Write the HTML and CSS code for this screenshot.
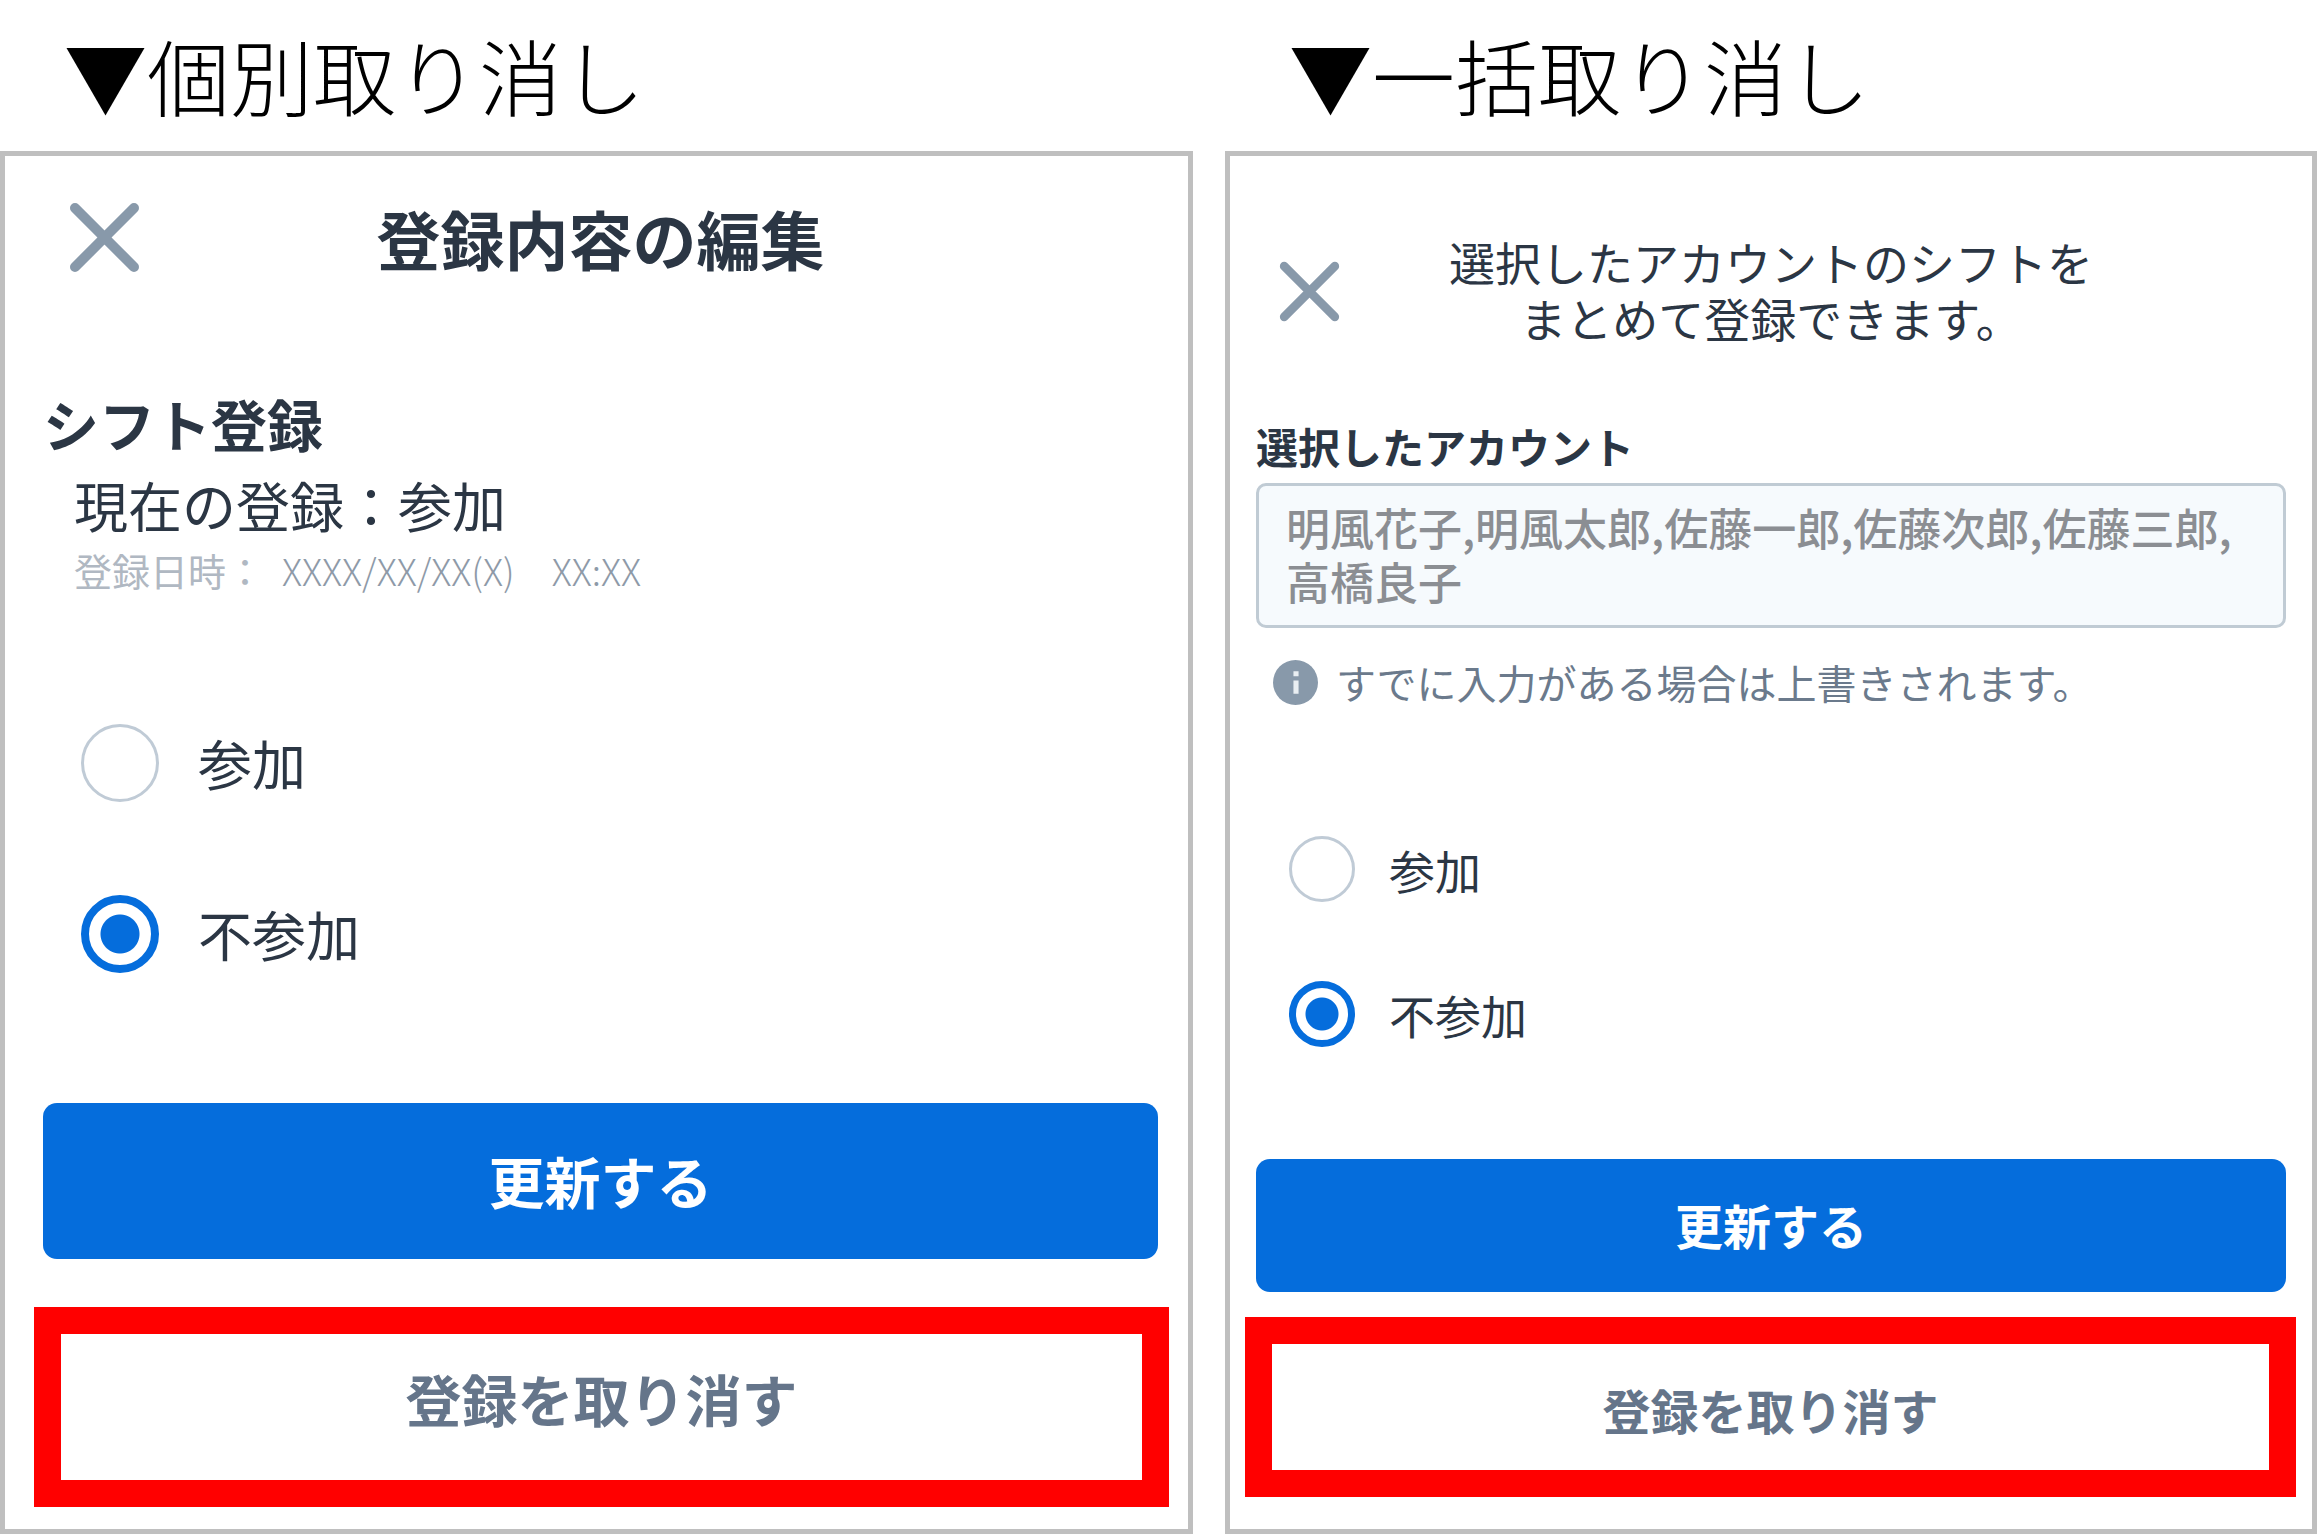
FILE: index.html
```html
<!DOCTYPE html>
<html lang="ja">
<head>
    <meta charset="UTF-8">
    <meta name="viewport" content="width=device-width, initial-scale=1.0">
    <title>シフト登録の取り消し</title>
    <link rel="stylesheet" href="styles.css">
</head>
<body>
    <main class="page">
        <section class="column single">
            <h1>▼個別取り消し</h1>
            <form class="panel">
                <div class="panel-header">
                    <button type="button" class="close-btn" aria-label="閉じる">
                        <svg viewBox="0 0 71 71"><path d="M6 6L65 65M65 6L6 65"/></svg>
                    </button>
                    <h2>登録内容の編集</h2>
                </div>

                <h3>シフト登録</h3>
                <p class="current">現在の登録：参加</p>
                <p class="date">登録日時：<span class="date-value">XXXX/XX/XX(X)　XX:XX</span></p>

                <div class="options">
                    <label class="option"><input type="radio" name="single">参加</label>
                    <label class="option"><input type="radio" name="single" checked>不参加</label>
                </div>

                <button type="button" class="submit-btn">更新する</button>
                <div class="highlight">
                    <button type="button" class="cancel-btn">登録を取り消す</button>
                </div>
            </form>
        </section>

        <section class="column bulk">
            <h1>▼一括取り消し</h1>
            <form class="panel">
                <div class="panel-header">
                    <button type="button" class="close-btn" aria-label="閉じる">
                        <svg viewBox="0 0 71 71"><path d="M6 6L65 65M65 6L6 65"/></svg>
                    </button>
                    <p class="lead">選択したアカウントのシフトを<br>まとめて登録できます。</p>
                </div>

                <label class="field-label" for="accounts">選択したアカウント</label>
                <textarea id="accounts" class="accounts" rows="2" readonly>明風花子,明風太郎,佐藤一郎,佐藤次郎,佐藤三郎,高橋良子</textarea>
                <p class="note">
                    <svg class="info-icon" viewBox="0 0 44 44">
                        <circle cx="22" cy="22" r="22" fill="#8899aa"/>
                        <path d="M20 11h5v5h-5zM20 20h5v13h-5z" fill="#e9eef2"/>
                    </svg>
                    すでに入力がある場合は上書きされます。
                </p>

                <div class="options">
                    <label class="option"><input type="radio" name="bulk">参加</label>
                    <label class="option"><input type="radio" name="bulk" checked>不参加</label>
                </div>

                <button type="button" class="submit-btn">更新する</button>
                <div class="highlight">
                    <button type="button" class="cancel-btn">登録を取り消す</button>
                </div>
            </form>
        </section>
    </main>
</body>
</html>
```

FILE: styles.css
```css
* {
    margin: 0;
    padding: 0;
    box-sizing: border-box;
}

body {
    font-family: "Noto Sans CJK JP", sans-serif;
    background: #fff;
    color: #2b3644;
}

button,
textarea {
    font-family: inherit;
    border: none;
    background: none;
}

.page {
    display: grid;
    grid-template-columns: 1193fr 1092fr;
    gap: 32px;
    min-height: 100vh;
}

.column {
    display: flex;
    flex-direction: column;
    min-width: 0;
}

h1 {
    padding: 26px 0 29px 64px;
    font-size: 83px;
    line-height: 96px;
    font-weight: 300;
    color: #000;
    white-space: nowrap;
}

.panel {
    flex: 1;
    display: flex;
    flex-direction: column;
    border: 5px solid #bfbfbf;
}

.single .panel {
    padding: 45px 30px 22px 38px;
}

.bulk .panel {
    padding: 77px 26px 32px;
}

.panel-header {
    display: grid;
    grid-template-columns: 1fr auto 1fr;
    align-items: center;
}

.close-btn {
    justify-self: start;
    width: 71px;
    height: 71px;
    margin-left: 26px;
    cursor: pointer;
}

.close-btn svg {
    display: block;
    width: 100%;
    height: 100%;
    fill: none;
    stroke: #8899aa;
    stroke-width: 10;
    stroke-linecap: round;
}

.bulk .close-btn {
    width: 61px;
    height: 61px;
    margin: 4px 0 0 23px;
}

h2 {
    font-size: 64px;
    line-height: 72px;
    font-weight: 700;
}

.lead {
    font-size: 46px;
    line-height: 56px;
    text-align: center;
}

h3 {
    margin-top: 118px;
    font-size: 56px;
    line-height: 64px;
    font-weight: 700;
}

.current {
    margin: 18px 0 0 31px;
    font-size: 54px;
    line-height: 64px;
}

.date {
    display: flex;
    gap: 18px;
    margin: 9px 0 0 31px;
    font-size: 38px;
    line-height: 48px;
    color: #b0b8c2;
}

.date-value {
    font-size: 37px;
    font-weight: 300;
    color: #8e9aa8;
}

.field-label {
    margin-top: 73px;
    font-size: 42px;
    line-height: 56px;
    font-weight: 700;
}

.accounts {
    display: block;
    width: 100%;
    margin-top: 9px;
    padding: 14px 27px 17px;
    border: 3px solid #c0cbd4;
    border-radius: 10px;
    background: #f6fafd;
    color: #8b8e93;
    font-size: 44px;
    line-height: 54px;
    font-weight: 500;
    resize: none;
    overflow: hidden;
    outline: none;
}

.note {
    display: flex;
    align-items: center;
    gap: 18px;
    margin: 26px 0 0 17px;
    font-size: 40px;
    line-height: 56px;
    color: #6b7a8c;
}

.info-icon {
    width: 45px;
    height: 45px;
}

.options {
    display: flex;
    flex-direction: column;
    align-items: flex-start;
    gap: 93px;
    margin: 130px 0 130px 38px;
}

.option {
    display: flex;
    align-items: center;
    gap: 39px;
    font-size: 54px;
    line-height: 78px;
    cursor: pointer;
}

.option input {
    appearance: none;
    width: 78px;
    height: 78px;
    border: 3px solid #c0cbd6;
    border-radius: 50%;
    background: #fff;
}

.option input:checked {
    border: 8px solid #056ddc;
    background: radial-gradient(circle, #056ddc 19px, #fff 20px);
}

.bulk .options {
    gap: 79px;
    margin: 126px 0 112px 33px;
}

.bulk .option {
    gap: 34px;
    font-size: 46px;
    line-height: 66px;
}

.bulk .option input {
    width: 66px;
    height: 66px;
}

.bulk .option input:checked {
    border-width: 7px;
    background: radial-gradient(circle, #056ddc 16px, #fff 17px);
}

.submit-btn {
    height: 156px;
    padding-bottom: 4px;
    border-radius: 14px;
    background: #056ddc;
    color: #fff;
    font-size: 56px;
    font-weight: 700;
    cursor: pointer;
}

/* red frame that points out the cancel button */
.highlight {
    display: flex;
    height: 200px;
    margin: 48px -11px 0 -9px;
    border: 27px solid #f00;
}

.cancel-btn {
    flex: 1;
    padding-bottom: 20px;
    color: #65758a;
    font-size: 56px;
    font-weight: 700;
    cursor: pointer;
}

.bulk .submit-btn {
    height: 133px;
    font-size: 48px;
}

.bulk .highlight {
    height: 180px;
    margin: 25px -10px 0 -11px;
}

.bulk .cancel-btn {
    padding: 4px 0 0;
    font-size: 48px;
}
```
